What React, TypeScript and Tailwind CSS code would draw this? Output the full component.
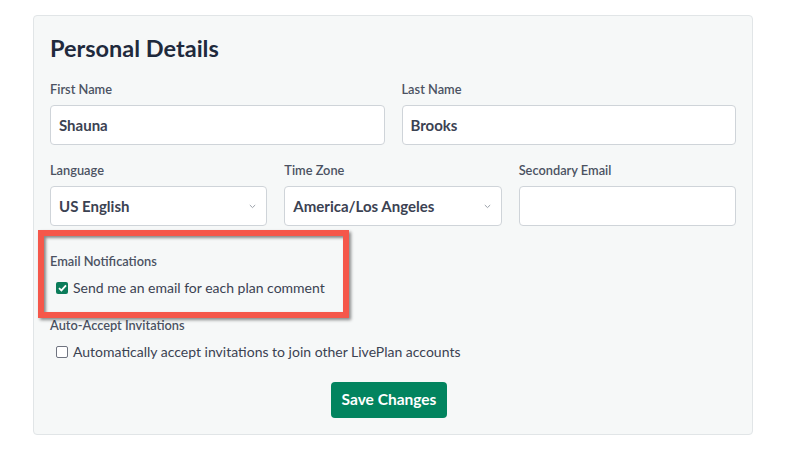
import React from "react";

const font = { fontFamily: "Lato, 'Noto Sans', sans-serif" };

function Label({ children }: { children: React.ReactNode }) {
  return (
    <div className="text-[12.8px] leading-4 font-semibold text-[#4b5262]">{children}</div>
  );
}

function TextInput({ value }: { value?: string }) {
  return (
    <div className="h-10 w-full rounded-[4px] border border-[#cfd4d9] bg-white px-[8px] flex items-center text-[15px] font-bold text-[#3b4252]">
      {value}
    </div>
  );
}

function Select({ value }: { value: string }) {
  return (
    <div className="h-10 w-full rounded-[4px] border border-[#cfd4d9] bg-white pl-[8px] pr-[10px] flex items-center justify-between text-[15px] font-bold text-[#3b4252]">
      <span>{value}</span>
      <svg width="7" height="5" viewBox="0 0 7 5" className="mt-[1px]">
        <path d="M0.8 1 L3.5 3.6 L6.2 1" fill="none" stroke="#9aa0a8" strokeWidth="1" />
      </svg>
    </div>
  );
}

function Checkbox({ checked }: { checked?: boolean }) {
  return checked ? (
    <span className="w-[12px] h-[12px] rounded-[2px] bg-[#0b7c5a] flex items-center justify-center shrink-0">
      <svg width="9" height="8" viewBox="0 0 9 8">
        <path d="M1 4.2 L3.4 6.4 L8 1.4" fill="none" stroke="#fff" strokeWidth="1.8" />
      </svg>
    </span>
  ) : (
    <span className="w-[12px] h-[12px] rounded-[2px] border border-[#6f7480] bg-white shrink-0" />
  );
}

export default function App() {
  return (
    <div className="w-[786px] h-[457px] bg-white pt-[15px] pl-[33px]" style={font}>
      <div className="w-[720px] h-[420px] rounded-[4px] border border-[#e1e5e7] bg-[#f6f8f8] px-[16px] pt-[18px]">
        <h1 className="text-[23.5px] leading-7 font-bold text-[#1f2a3d]">Personal Details</h1>

        <div className="mt-[19px] grid grid-cols-2 gap-x-[17px]">
          <div>
            <Label>First Name</Label>
            <div className="mt-[8px]">
              <TextInput value="Shauna" />
            </div>
          </div>
          <div>
            <Label>Last Name</Label>
            <div className="mt-[8px]">
              <TextInput value="Brooks" />
            </div>
          </div>
        </div>

        <div className="mt-[17px] grid grid-cols-3 gap-x-[17px]">
          <div>
            <Label>Language</Label>
            <div className="mt-[8px]">
              <Select value="US English" />
            </div>
          </div>
          <div>
            <Label>Time Zone</Label>
            <div className="mt-[8px]">
              <Select value="America/Los Angeles" />
            </div>
          </div>
          <div>
            <Label>Secondary Email</Label>
            <div className="mt-[8px]">
              <TextInput />
            </div>
          </div>
        </div>

        <div className="relative mt-[27px]">
          <Label>Email Notifications</Label>
          <div className="mt-[10px] flex items-center gap-[5px] pl-[6px] text-[14px] leading-[18px] text-[#3b4252]">
            <Checkbox checked />
            <span>Send me an email for each plan comment</span>
          </div>
          <div className="absolute left-[-12px] top-[-23px] w-[311px] h-[88px] border-[6px] border-[#f5574a] shadow-[2px_2px_3px_rgba(0,0,0,0.45),inset_2px_2px_3px_rgba(0,0,0,0.45)] pointer-events-none" />
        </div>

        <div className="mt-[20px]">
          <Label>Auto-Accept Invitations</Label>
          <div className="mt-[10px] flex items-center gap-[5px] pl-[6px] text-[14px] leading-[18px] text-[#3b4252]">
            <Checkbox />
            <span>Automatically accept invitations to join other LivePlan accounts</span>
          </div>
        </div>

        <div className="mt-[21px] flex justify-center pr-[8px]">
          <button className="h-[36px] w-[116px] rounded-[4px] bg-[#02845f] text-white text-[15.5px] font-bold">
            Save Changes
          </button>
        </div>
      </div>
    </div>
  );
}
